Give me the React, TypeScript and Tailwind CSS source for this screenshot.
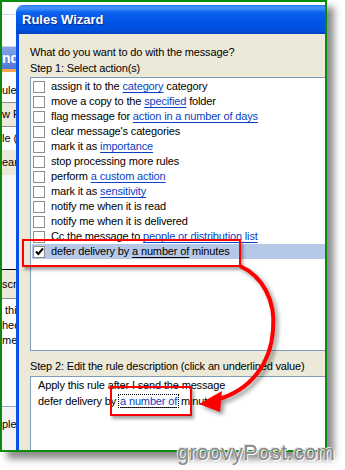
import React from "react";

type Part = string | { link: string };

const actions: Part[][] = [
  ["assign it to the ", { link: "category" }, " category"],
  ["move a copy to the ", { link: "specified" }, " folder"],
  ["flag message for ", { link: "action in a number of days" }],
  ["clear message's categories"],
  ["mark it as ", { link: "importance" }],
  ["stop processing more rules"],
  ["perform ", { link: "a custom action" }],
  ["mark it as ", { link: "sensitivity" }],
  ["notify me when it is read"],
  ["notify me when it is delivered"],
  ["Cc the message to ", { link: "people or distribution list" }],
];

const CheckBox = ({ checked }: { checked?: boolean }) => (
  <span className="w-[12px] h-[12px] border border-[#8d8d8d] bg-white shrink-0 flex items-center justify-center">
    {checked && (
      <svg width="9" height="9" viewBox="0 0 9 9">
        <path d="M1 4.5 L3.3 7 L8 1.5" stroke="#000" strokeWidth="2" fill="none" />
      </svg>
    )}
  </span>
);

const Row = ({ parts }: { parts: Part[] }) => (
  <div className="h-[15px] ml-[1px] pl-[1px] flex items-center gap-[6px]">
    <CheckBox />
    <span className="whitespace-pre">
      {parts.map((p, i) =>
        typeof p === "string" ? (
          <span key={i}>{p}</span>
        ) : (
          <span key={i} className="text-[#0a3fc4] underline underline-offset-[2px]">
            {p.link}
          </span>
        )
      )}
    </span>
  </div>
);

// left strip: bits of the Outlook window behind the dialog
const LeftStrip = () => (
  <div className="w-[14px] shrink-0 flex flex-col text-[11px] text-black leading-none overflow-hidden">
    <div className="h-[13px] border-b border-[#c9d5ea] bg-white" />
    <div className="h-[32px] border-b border-[#c9d5ea] bg-white" />
    <div className="h-[22px] bg-gradient-to-b from-[#86a6ea] to-[#4f78d8] flex items-center text-white font-bold text-[14px] whitespace-nowrap">
      nd
    </div>
    <div className="h-[3px] bg-[#f2a84a]" />
    <div className="h-[31px] bg-white border-b border-[#8c8c8c] flex items-end pb-[6px] whitespace-nowrap">
      ule
    </div>
    <div className="h-[24px] bg-[#ece9d8] border-b border-[#8c8c8c] flex items-center whitespace-nowrap">
      w R
    </div>
    <div className="h-[23px] bg-white flex items-center whitespace-nowrap">le (</div>
    <div className="h-[25px] bg-[#ece9d8] flex items-center whitespace-nowrap">ear</div>
    <div className="h-[95px] bg-[#f7f7f7] border-b border-black" />
    <div className="h-[29px] bg-[#ece9d8] border-b border-[#8c8c8c] flex items-center whitespace-nowrap">
      scr
    </div>
    <div className="h-[108px] bg-white flex flex-col pt-[4px] leading-[15px] whitespace-nowrap border-b border-[#8faacf]">
      <span>&nbsp;thi</span>
      <span>hed</span>
      <span>mes</span>
    </div>
    <div className="flex-1 bg-[#f4f4f4] flex items-start pt-[12px] whitespace-nowrap">ple</div>
  </div>
);

export default function App() {
  return (
    <div className="w-[345px] h-[470px] bg-white relative overflow-hidden font-['Liberation_Sans',Arial,sans-serif] text-[11px] text-black">
      <div className="w-[327px] h-[452px] border-2 border-[#0b8a0b] bg-white flex overflow-hidden shadow-[7px_7px_7px_rgba(0,0,0,0.45)]">
        <LeftStrip />
        <div className="w-[360px] shrink-0 mt-[3px] rounded-tl-[7px] overflow-hidden flex flex-col">
          <div className="h-[29px] shrink-0 flex items-center pl-[6px] bg-[linear-gradient(to_bottom,#2a76f2_0%,#4a97ff_10%,#0c62ec_25%,#0055e6_60%,#0050dc_88%,#003fbf_100%)]">
            <span className="text-white font-bold text-[13px] [text-shadow:1px_1px_0_#0a2a8a]">Rules Wizard</span>
          </div>
          <div className="flex-1 bg-[#ece9d8] border-l-[3px] border-[#0b50e6] pl-[11px] pt-[10px] leading-[16px] tracking-[-0.15px]">
            <div>What do you want to do with the message?</div>
            <div>Step 1: Select action(s)</div>
            <div className="mt-[1px] h-[274px] w-[320px] bg-white border border-[#7f9db9] pt-[1px] leading-[15px]">
              {actions.map((a, i) => (
                <Row key={i} parts={a} />
              ))}
              <div className="h-[15px] ml-[1px] pl-[1px] flex items-center gap-[6px] bg-[#b5c8e7]">
                <CheckBox checked />
                <span className="whitespace-pre">
                  defer delivery by <span className="underline underline-offset-[2px]">a number of</span> minutes
                </span>
              </div>
            </div>
            <div className="mt-[7px]">Step 2: Edit the rule description (click an underlined value)</div>
            <div className="mt-[2px] h-[100px] w-[320px] bg-white border border-[#7f9db9] pl-[7px]">
              <div>Apply this rule after I send the message</div>
              <div className="whitespace-pre">
                defer delivery by{" "}
                <span className="outline-1 outline-dotted outline-black px-[1px] text-[#0a3fc4] underline underline-offset-[2px]">
                  a number of
                </span>{" "}
                minutes
              </div>
            </div>
          </div>
        </div>
      </div>

      {/* red callouts */}
      <div className="absolute left-[22px] top-[239px] w-[219px] h-[28px] border-2 border-[#ff0000] shadow-[2px_3px_3px_rgba(0,0,0,0.35)]" />
      <div className="absolute left-[110px] top-[386px] w-[82px] h-[30px] border-2 border-[#ff0000] shadow-[2px_3px_3px_rgba(0,0,0,0.35)]" />
      <svg
        className="absolute left-0 top-0 pointer-events-none [filter:drop-shadow(3px_3px_2px_rgba(0,0,0,0.4))]"
        width="345"
        height="470"
        viewBox="0 0 345 470"
      >
        <path
          d="M240 266 C262 276 276 300 273 330 C271 362 252 390 216 400"
          stroke="#ff0000"
          strokeWidth="4"
          fill="none"
        />
        <polygon points="199,404 222,391 220,412" fill="#ff0000" />
      </svg>

      <div className="absolute left-[177px] top-[440px] text-[22px] leading-[26px] text-[#8a8a8a] [text-shadow:1px_1px_0_#ffffff,-1px_-1px_0_#e6e6e6] whitespace-nowrap">
        groovyPost.com
      </div>
    </div>
  );
}
